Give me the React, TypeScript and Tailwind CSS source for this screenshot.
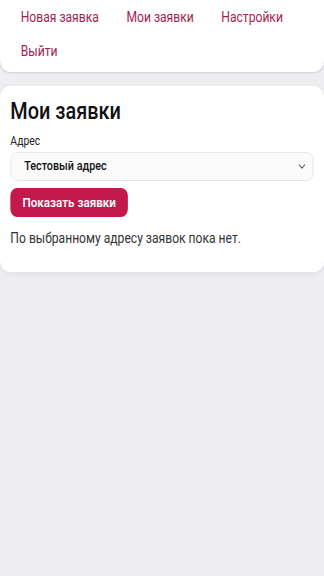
import { ChevronDown } from 'lucide-react';

const links = ["Новая заявка", "Мои заявки", "Настройки", "Выйти"];

export default function App() {
  return (
    <div className="min-h-[576px] overflow-hidden bg-[#eeeef1]">
      {/* page is laid out at 375px and squeezed to the 324px viewport, like the reference */}
      <div className="w-[375px] origin-top-left scale-x-[0.864] font-['Roboto',sans-serif] text-[#1a1a1a]">
        {/* Top navigation */}
        <nav className="flex flex-wrap rounded-b-xl bg-white px-2 pb-[4px] shadow-sm">
          {links.map((l) => (
            <a key={l} className="px-4 py-[8px] text-[14px] leading-[18px] text-[#a61d4f]">
              {l}
            </a>
          ))}
        </nav>

        {/* Requests card */}
        <section className="mt-[14px] rounded-xl bg-white px-3 pt-[14px] pb-[26px] shadow-[0_2px_8px_rgba(0,0,0,0.06)]">
          <h1 className="text-[23px] font-medium leading-[24px] text-[#111]">Мои заявки</h1>
          <label className="mt-[10px] block text-[12px] leading-[14px] text-[#222]">Адрес</label>
          <div className="mt-[4px] flex h-[29px] items-center justify-between rounded-lg border border-[#e6e6ea] bg-[#fbfbfc] pl-[15px] pr-[6px]">
            <span className="text-[12.5px] font-medium text-[#111]">Тестовый адрес</span>
            <ChevronDown size={13} strokeWidth={2} className="text-[#555]" />
          </div>
          <button className="mt-[7px] h-[29px] rounded-lg bg-[#c2184b] px-[14px] text-[13.5px] font-semibold text-white">
            Показать заявки
          </button>
          <p className="mt-[13px] text-[14px] leading-[16px] text-[#333]">По выбранному адресу заявок пока нет.</p>
        </section>
      </div>
    </div>
  );
}
